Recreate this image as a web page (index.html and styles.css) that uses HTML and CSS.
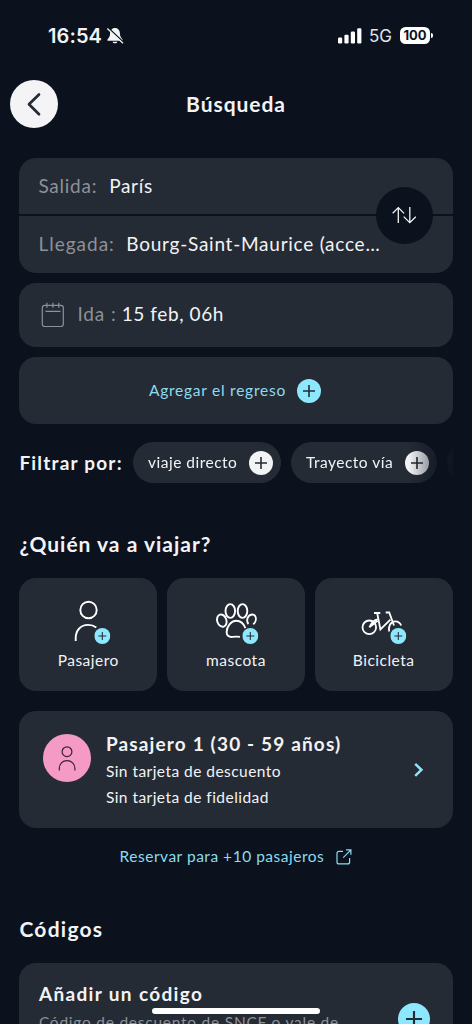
FILE: index.html
```html
<!DOCTYPE html>
<html lang="es">
<head>
<meta charset="utf-8">
<meta name="viewport" content="width=device-width">
<title>Búsqueda</title>
<link rel="stylesheet" href="styles.css">
</head>
<body>
<svg width="0" height="0" class="defs">
  <symbol id="plus" viewBox="0 0 24 24"><circle cx="12" cy="12" r="12" fill="currentColor"/><path d="M12 6v12M6 12h12" stroke="#252b35" stroke-width="1.6" fill="none"/></symbol>
</svg>
<div class="screen">
  <div class="status">
    <div class="clock"><span>16:54</span>
      <svg width="18" height="18" viewBox="0 0 18 18"><path d="M9 1C5.700 1 4.200 3.600 4.100 6.400 4 9.600 2.800 10.700 1.500 12.500c-.4.7 0 1.300.8 1.300h13.400c.8 0 1.200-.6.8-1.300-1.300-1.800-2.500-2.900-2.600-6.100C13.800 3.600 12.300 1 9 1zM6.600 14.800h4.800c-.4 2-4.400 2-4.800 0z" fill="#f2f3f5"/><path d="M2.200 .9 17.600 15.400" stroke="#0b121d" stroke-width="1.500"/><path d="M1.300 1.500 17 16.300" stroke="#f2f3f5" stroke-width="1.300"/></svg>
    </div>
    <div class="signals">
      <svg width="24" height="16" viewBox="0 0 24 16" fill="#fff"><rect x="0" y="9.500" width="4.200" height="6" rx="1.200"/><rect x="6.400" y="6.800" width="4.200" height="8.700" rx="1.200"/><rect x="12.800" y="3.500" width="4.200" height="12" rx="1.200"/><rect x="19.200" y="0.200" width="4.200" height="15.300" rx="1.200"/></svg>
      <span class="net">5G</span>
      <span class="battery">100</span><span class="cap"></span>
    </div>
  </div>

  <header class="header">
    <button class="back" aria-label="Volver"><svg width="48" height="48" viewBox="0 0 48 48"><path d="M29 14.500 19 24.200l10 10" fill="none" stroke="#252b35" stroke-width="2.700" stroke-linecap="round" stroke-linejoin="round"/></svg></button>
    <h1 class="title">Búsqueda</h1>
  </header>

  <main class="content">
    <section class="route">
      <div class="stop stop-from"><span class="label from-label">Salida:</span><span class="value from-value">París</span></div>
      <div class="stop stop-to"><span class="label to-label">Llegada:</span><span class="value to-value">Bourg-Saint-Maurice (acce…</span></div>
      <button class="swap" aria-label="Invertir"><svg width="26" height="20" viewBox="0 0 26 20" fill="none" stroke="#f2f3f5" stroke-width="1.300"><path d="M7.300 18V2.500M1.700 8.200l5.600-5.600 5.800 5.800M18.800 2v15.500M12.700 11.600l6.100 6.100 6-6"/></svg></button>
    </section>

    <section class="card date">
      <svg width="24" height="26" viewBox="0 0 24 26" fill="none" stroke="#8d9198" stroke-width="1.200"><rect x="1.300" y="3.300" width="21" height="21.200" rx="2.500"/><path d="M4.500 9.300h15M5.900.8v5M11.900.8v5M17.800.8v5"/></svg>
      <span class="label date-label">Ida :</span><span class="value date-value">15 feb, 06h</span>
    </section>

    <section class="card return"><span class="link return-text">Agregar el regreso</span><svg class="cyan" width="24" height="24"><use href="#plus"/></svg></section>

    <section class="filters">
      <h2 class="filter-title">Filtrar por:</h2>
      <div class="pills">
        <div class="pill direct"><span>viaje directo</span><svg width="24" height="24"><use href="#plus"/></svg></div>
        <div class="pill via"><span>Trayecto vía</span><svg width="24" height="24"><use href="#plus"/></svg></div>
        <div class="pill next"></div>
      </div>
    </section>

    <h2 class="heading who">¿Quién va a viajar?</h2>
    <section class="tiles">
      <div class="tile">
        <svg width="60" height="50" viewBox="0 0 60 50" fill="none" stroke="#fff" stroke-width="1.900"><circle cx="30.500" cy="12" r="8.200"/><path d="M17.700 43v-2.800C17.700 32 23 26.900 30 26.900c3.400 0 6 .8 8.300 2.600"/><g class="cyan"><use href="#plus" x="36.300" y="30" width="16" height="16" stroke="none"/></g></svg>
        <span>Pasajero</span>
      </div>
      <div class="tile">
        <svg width="60" height="50" viewBox="0 0 60 50" fill="none" stroke="#fff" stroke-width="1.900"><ellipse cx="15.800" cy="22.600" rx="4.600" ry="6.300" transform="rotate(-18 15.800 22.600)"/><ellipse cx="24.300" cy="13" rx="4.800" ry="6.900"/><ellipse cx="36.500" cy="13" rx="4.800" ry="6.900"/><path d="M42.500 26c-1.900-2-1.700-5.500.2-7.800 1.900-2.200 5.200-2.300 6.400-.3 1.500 2.700.7 6.300-1.900 8.400M34 38.900c-2.600-.5-5-.3-7.500 0-3.200.6-5.900-1.300-5.900-4.600 0-5.900 4.500-11.500 9.700-11.500 4 0 7.500 3.200 9 7.300"/><g class="cyan"><use href="#plus" x="36.300" y="30" width="16" height="16" stroke="none"/></g></svg>
        <span>mascota</span>
      </div>
      <div class="tile">
        <svg width="60" height="50" viewBox="0 0 60 50" fill="none" stroke="#fff" stroke-width="1.800"><circle cx="15.300" cy="29.300" r="6.800"/><path d="m15.300 29.300 8.200-6.500M20 15h6.300M23.200 15l3.200 16.500 10-9.800M31.700 14.500h3.500l4.800 13M23.500 21.300c-3 .3-5.800 2.700-8.200 8M35.200 33.500c-1.200-5 1.500-10.200 6-10.200 2.900 0 5 1.600 6 4.200"/><g class="cyan"><use href="#plus" x="36.300" y="30" width="16" height="16" stroke="none"/></g></svg>
        <span>Bicicleta</span>
      </div>
    </section>

    <section class="card passenger">
      <div class="avatar"><svg width="48" height="48" viewBox="0 0 48 48" fill="none" stroke="#3b2134" stroke-width="1.200"><circle cx="24" cy="17.700" r="4.900"/><path d="M16.300 36.500v-2c0-4.500 3.200-7.800 7.700-7.800s7.900 3.300 7.900 7.800v2"/></svg></div>
      <div class="details">
        <h3 class="name">Pasajero 1 (30 - 59 años)</h3>
        <p class="info">Sin tarjeta de descuento</p>
        <p class="info">Sin tarjeta de fidelidad</p>
      </div>
      <svg class="chevron" width="12" height="16" viewBox="0 0 12 16"><path d="m2.200 1.800 6.200 6-6.200 6" fill="none" stroke="#8ee6fb" stroke-width="2.500"/></svg>
    </section>

    <div class="group"><span class="link group-text">Reservar para +10 pasajeros</span><svg width="16" height="16" viewBox="0 0 16 16" fill="none" stroke="#8cdcef" stroke-width="1.200"><path d="M7 2.300H3Q1 2.300 1 4.300v8.600q0 2 2 2h8.600q2 0 2-2V9M10 .9h4.900V5.700M14.700 1.100 7.200 8.600"/></svg></div>

    <h2 class="heading codes">Códigos</h2>
    <section class="card code">
      <div><h3 class="code-title">Añadir un código</h3><p class="code-text">Código de descuento de SNCF o vale de</p></div>
      <svg class="cyan code-plus" width="32" height="32"><use href="#plus"/></svg>
    </section>
  </main>
  <div class="home"></div>
</div>
</body>
</html>
```
FILE: styles.css
```css
* { box-sizing: border-box; margin: 0; padding: 0; }
body { background: #0b121d; color: #f2f3f5; font-family: Lato, sans-serif; }
button { border: 0; color: inherit; font: inherit; }
svg { flex: none; display: block; }
span, h1, h2, h3, p { white-space: nowrap; }
.defs { position: absolute; }
.screen { position: relative; width: 472px; height: 1024px; overflow: hidden; background: #0b121d; }

.status { height: 70px; padding: 1px 39px 0 48px; display: flex; align-items: center; justify-content: space-between; font-family: Inter, sans-serif; }
.clock { display: flex; align-items: center; gap: 4px; font-size: 20px; font-weight: 600; letter-spacing: 0.1px; }
.signals { display: flex; align-items: center; }
.net { margin: 0 8px 0 7px; font-size: 17px; font-weight: 400; color: #e2e4e7; }
.battery { width: 30px; height: 17px; border-radius: 5.500px; background: #fff; color: #0b121d; font-size: 13px; font-weight: 700; line-height: 17px; text-align: center; }
.cap { width: 2px; height: 5px; margin-left: 1px; border-radius: 0 2px 2px 0; background: #fff; }

.header { height: 87.500px; padding: 10px 10px 0; display: grid; grid-template-columns: 48px 1fr 48px; align-items: start; }
.back { width: 48px; height: 48px; border-radius: 50%; background: #f4f3f6; }
.title { text-align: center; line-height: 48px; font-size: 21px; font-weight: 700; letter-spacing: 0.95px; }

.content { padding: 0 19.500px 0 19.400px; display: flex; flex-direction: column; }
.card, .stop, .tile { background: #252b35; }
.card { border-radius: 17px; display: flex; align-items: center; }
.label { color: #8d9198; }
.label, .value { font-size: 19px; }
.link { color: #8cdcef; font-size: 15.500px; }
.cyan { color: #8ee8fd; }

.route { position: relative; display: grid; grid-template-rows: 56.500px 57px; gap: 2px; }
.stop { display: flex; align-items: center; padding-left: 19px; padding-bottom: 2px; }
.stop-from { border-radius: 17px 17px 0 0; gap: 12px; padding-bottom: 0; }
.stop-to { border-radius: 0 0 17px 17px; gap: 11.500px; }
.from-label { letter-spacing: 0.75px; }
.from-value { letter-spacing: 0.7px; }
.to-label { letter-spacing: 1px; }
.to-value { letter-spacing: 0.75px; }
.swap { position: absolute; right: 19.500px; top: 29px; width: 57px; height: 57px; padding-right: 2px; border-radius: 50%; background: #0b121d; display: grid; place-items: center; }

.date { height: 64px; margin-top: 10px; padding: 0 0 0 22px; }
.date-label { margin: -3px 5px 0 12px; letter-spacing: 0.9px; }
.date-value { margin-top: -3px; letter-spacing: 0.6px; }
.return { height: 67px; margin-top: 10px; padding-right: 2px; justify-content: center; gap: 11px; }
.return-text { margin-top: -2px; letter-spacing: 0.75px; }

.filters { margin-top: 18px; height: 41px; display: flex; align-items: center; justify-content: space-between; }
.filter-title { font-size: 19px; font-weight: 700; letter-spacing: 1.2px; }
.pills { width: 320px; display: flex; gap: 10px; overflow: hidden; -webkit-mask-image: linear-gradient(90deg, #000 276px, transparent 328px); mask-image: linear-gradient(90deg, #000 276px, transparent 328px); }
.pill { flex: none; height: 41px; border-radius: 21px; background: #252b35; display: flex; align-items: center; justify-content: space-between; padding: 0 8px 0 15.500px; font-size: 15.500px; letter-spacing: 0.5px; }
.pill span { margin-top: -2px; }
.direct { width: 148px; }
.via { width: 146px; }
.next { width: 100px; }

.heading { font-size: 21px; font-weight: 700; line-height: 26px; letter-spacing: 1px; }
.who { margin-top: 48px; }
.tiles { margin-top: 21px; display: grid; grid-template-columns: repeat(3, 1fr); gap: 10px; }
.tile { height: 113px; border-radius: 17px; padding-top: 20px; display: flex; flex-direction: column; align-items: center; gap: 3px; font-size: 15.500px; letter-spacing: 0.5px; }

.passenger { height: 117px; margin-top: 20px; padding: 0 28px 0 23.500px; }
.avatar { width: 48px; height: 48px; border-radius: 50%; background: #f49ac4; margin: -22.500px 15px 0 0; }
.details { flex: 1; font-size: 15.500px; line-height: 26px; padding-bottom: 1px; letter-spacing: 0.46px; }
.name { font-size: 19px; line-height: 29px; font-weight: 700; letter-spacing: 1.150px; }
.info { font-variant-ligatures: none; }
.group { height: 26px; margin-top: 15.500px; display: flex; align-items: center; justify-content: center; gap: 12px; }
.group-text { margin-top: -1px; letter-spacing: 0.520px; }
.codes { margin-top: 46px; letter-spacing: 1.250px; }
.code { height: 120px; margin-top: 21px; padding: 17.500px 23px 0 19.500px; align-items: flex-start; justify-content: space-between; }
.code-title { font-size: 19px; line-height: 28px; font-weight: 700; letter-spacing: 1.350px; }
.code-text { font-size: 15.500px; line-height: 28px; color: #8d9198; letter-spacing: 0.760px; }
.code-plus { margin-top: 22.500px; }
.home { position: absolute; left: 152px; top: 1008px; width: 168px; height: 6px; border-radius: 3px; background: #fff; }
```
